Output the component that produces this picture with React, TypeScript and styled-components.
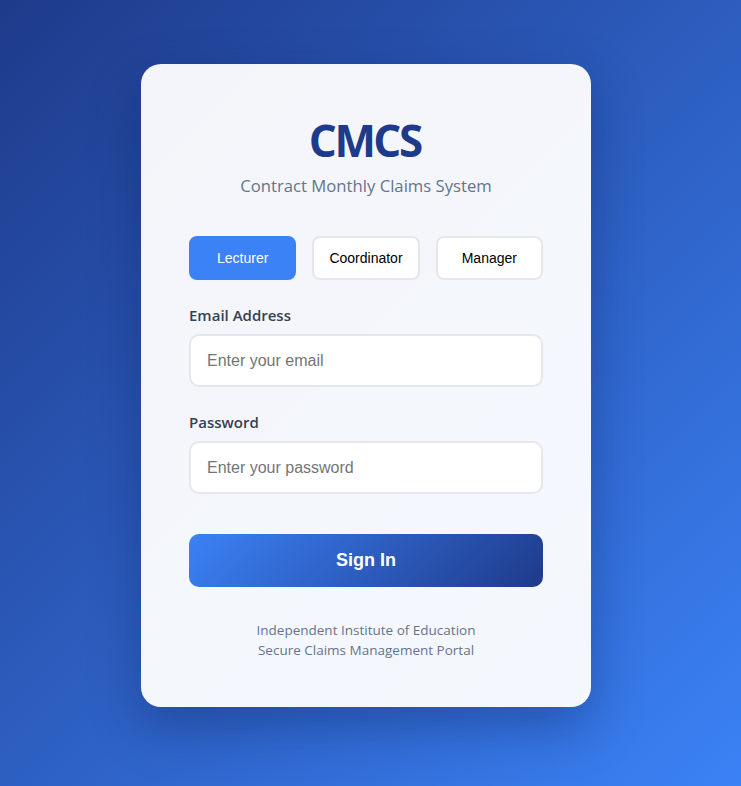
import React, { useState } from "react";
import styled, { createGlobalStyle } from "styled-components";

const GlobalStyle = createGlobalStyle`
  html, body { margin: 0; padding: 0; }
  body {
    min-height: 786px;
    background: linear-gradient(135deg, #1e3a8a 0%, #3b82f6 100%);
    font-family: "Open Sans", "Noto Sans", sans-serif;
  }
  * { box-sizing: border-box; }
`;

const Page = styled.div`
  min-height: 786px;
  display: flex;
  justify-content: center;
  align-items: flex-start;
  padding: 64px 150px 64px 141px;
`;

const Card = styled.div`
  width: 450px;
  background: rgba(255, 255, 255, 0.95);
  border-radius: 20px;
  box-shadow: 0 20px 50px rgba(10, 25, 80, 0.35);
  padding: 48px 48px 47px;
  display: flex;
  flex-direction: column;
`;

const Header = styled.div`
  text-align: center;
  margin-bottom: 38px;
`;

const Title = styled.h1`
  margin: 0;
  font-size: 44px;
  font-weight: 700;
  color: #1e3a8a;
  line-height: 56px;
  letter-spacing: -2.5px;
  text-indent: -2.5px;
`;

const Subtitle = styled.p`
  margin: 6px 0 0;
  font-size: 16.7px;
  color: #64748b;
  line-height: 24px;
`;

const RoleRow = styled.div`
  display: grid;
  grid-template-columns: repeat(3, 1fr);
  gap: 16px;
  margin-bottom: 24px;
`;

const RoleButton = styled.button<{ $active?: boolean }>`
  height: 44px;
  border-radius: 8px;
  font-family: "Liberation Sans", Arial, sans-serif;
  font-size: 14px;
  cursor: pointer;
  border: 2px solid ${(p) => (p.$active ? "#3b82f6" : "#e5e7eb")};
  background: ${(p) => (p.$active ? "#3b82f6" : "#ffffff")};
  color: ${(p) => (p.$active ? "#ffffff" : "#000000")};
`;

const Field = styled.div`
  display: flex;
  flex-direction: column;
  margin-bottom: 24px;
`;

const Label = styled.label`
  font-size: 15px;
  font-weight: 600;
  color: #374151;
  line-height: 22px;
  margin-bottom: 8px;
`;

const Input = styled.input`
  height: 53px;
  border: 2px solid #e5e7eb;
  border-radius: 10px;
  background: #ffffff;
  padding: 0 16px;
  font-family: "Liberation Sans", Arial, sans-serif;
  font-size: 16px;
  color: #111827;
  outline: none;
  &::placeholder { color: #757575; }
`;

const SignIn = styled.button`
  margin-top: 16px;
  height: 53px;
  border: none;
  border-radius: 10px;
  background: linear-gradient(135deg, #3b82f6 0%, #1e3a8a 100%);
  color: #ffffff;
  font-family: "Liberation Sans", Arial, sans-serif;
  font-size: 18px;
  font-weight: 700;
  cursor: pointer;
`;

const Footer = styled.div`
  margin-top: 33px;
  text-align: center;
  font-size: 13.5px;
  line-height: 20px;
  color: #64748b;
`;

export default function App() {
  const [role, setRole] = useState("Lecturer");
  const roles = ["Lecturer", "Coordinator", "Manager"];
  return (
    <>
      <GlobalStyle />
      <Page>
        <Card>
          <Header>
            <Title>CMCS</Title>
            <Subtitle>Contract Monthly Claims System</Subtitle>
          </Header>
          <RoleRow>
            {roles.map((r) => (
              <RoleButton key={r} $active={role === r} onClick={() => setRole(r)}>
                {r}
              </RoleButton>
            ))}
          </RoleRow>
          <Field>
            <Label>Email Address</Label>
            <Input type="email" placeholder="Enter your email" />
          </Field>
          <Field>
            <Label>Password</Label>
            <Input type="password" placeholder="Enter your password" />
          </Field>
          <SignIn>Sign In</SignIn>
          <Footer>
            Independent Institute of Education
            <br />
            Secure Claims Management Portal
          </Footer>
        </Card>
      </Page>
    </>
  );
}
